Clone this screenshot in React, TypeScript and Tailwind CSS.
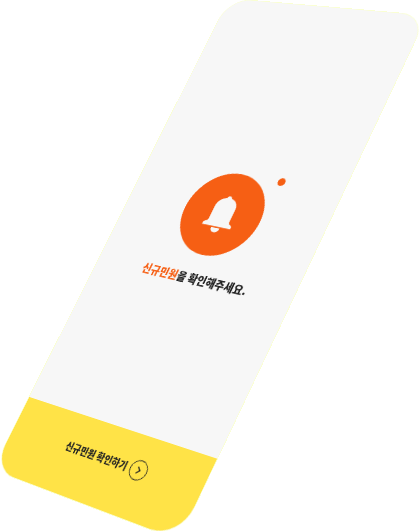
import React from "react";

type Point = [number, number];

const CARD_WIDTH = 280;
const CARD_HEIGHT = 660;

// Where the card's corners land once it is tilted: top left, top right, bottom right, bottom left.
const CORNERS: [Point, Point, Point, Point] = [
  [229, -2],
  [428, 15],
  [179, 541],
  [-8, 470],
];

// Perspective matrix that carries a width x height box onto four corners.
function tilt(width: number, height: number, corners: [Point, Point, Point, Point]): string {
  const [[x0, y0], [x1, y1], [x2, y2], [x3, y3]] = corners;
  const dx1 = x1 - x2;
  const dx2 = x3 - x2;
  const dy1 = y1 - y2;
  const dy2 = y3 - y2;
  const sx = x0 - x1 + x2 - x3;
  const sy = y0 - y1 + y2 - y3;
  const den = dx1 * dy2 - dx2 * dy1;
  const g = (sx * dy2 - dx2 * sy) / den;
  const h = (dx1 * sy - sx * dy1) / den;
  const across = [(x1 - x0 + g * x1) / width, (y1 - y0 + g * y1) / width, 0, g / width];
  const down = [(x3 - x0 + h * x3) / height, (y3 - y0 + h * y3) / height, 0, h / height];
  return `matrix3d(${[...across, ...down, 0, 0, 1, 0, x0, y0, 0, 1].join(",")})`;
}

function BellBadge() {
  return (
    <div className="relative flex size-27 items-center justify-center rounded-full bg-[#f65f14]">
      <svg viewBox="0 0 44 52" className="h-12 w-11" fill="#f7f7f7" aria-hidden="true">
        <path d="M22 0a3.500 3.500 0 0 1 3.500 3C33.500 4.500 38 10 38 17.500v17c0 1.500 1 2.500 2.500 3.500 2.500 1 3.500 2 3.500 4v1.500H0V42c0-2 1-3 3.500-4C5 37 6 36 6 34.500v-17C6 10 10.500 4.500 18.500 3A3.500 3.500 0 0 1 22 0Z" />
        <path d="M15.500 45.500h13c0 3.800-2.600 6.500-6.500 6.500s-6.500-2.700-6.500-6.500Z" />
      </svg>
      <span className="absolute -right-2 -top-1 size-2.5 rounded-full bg-[#f65f14]" />
    </div>
  );
}

export default function App() {
  return (
    <main className="h-screen overflow-hidden bg-white font-['Noto_Sans_CJK_KR',sans-serif] text-[#222222]">
      <section
        className="flex h-[660px] w-[280px] origin-top-left flex-col overflow-hidden rounded-[34px] rounded-br-[40px] border border-[#faffd2] bg-[#f7f7f7]"
        style={{ transform: tilt(CARD_WIDTH, CARD_HEIGHT, CORNERS) }}
      >
        <div className="flex flex-1 flex-col items-center gap-5 pt-58">
          <BellBadge />
          <h1 className="whitespace-nowrap pl-2 text-sm font-black">
            <span className="text-[#f65f14]">신규민원</span>을 확인해주세요.
          </h1>
        </div>
        <button
          type="button"
          className="flex h-24 items-center justify-center gap-1 bg-[#ffe347] pb-4 pl-2 text-xs font-black"
        >
          <span>신규민원 확인하기</span>
          <span className="flex size-6 items-center justify-center rounded-full border border-[#222222]">
            <svg viewBox="0 0 8 10" className="h-2.5 w-2" fill="none" stroke="#222222" strokeWidth="1.500" aria-hidden="true">
              <path d="m2 1 4 4-4 4" />
            </svg>
          </span>
        </button>
      </section>
    </main>
  );
}
